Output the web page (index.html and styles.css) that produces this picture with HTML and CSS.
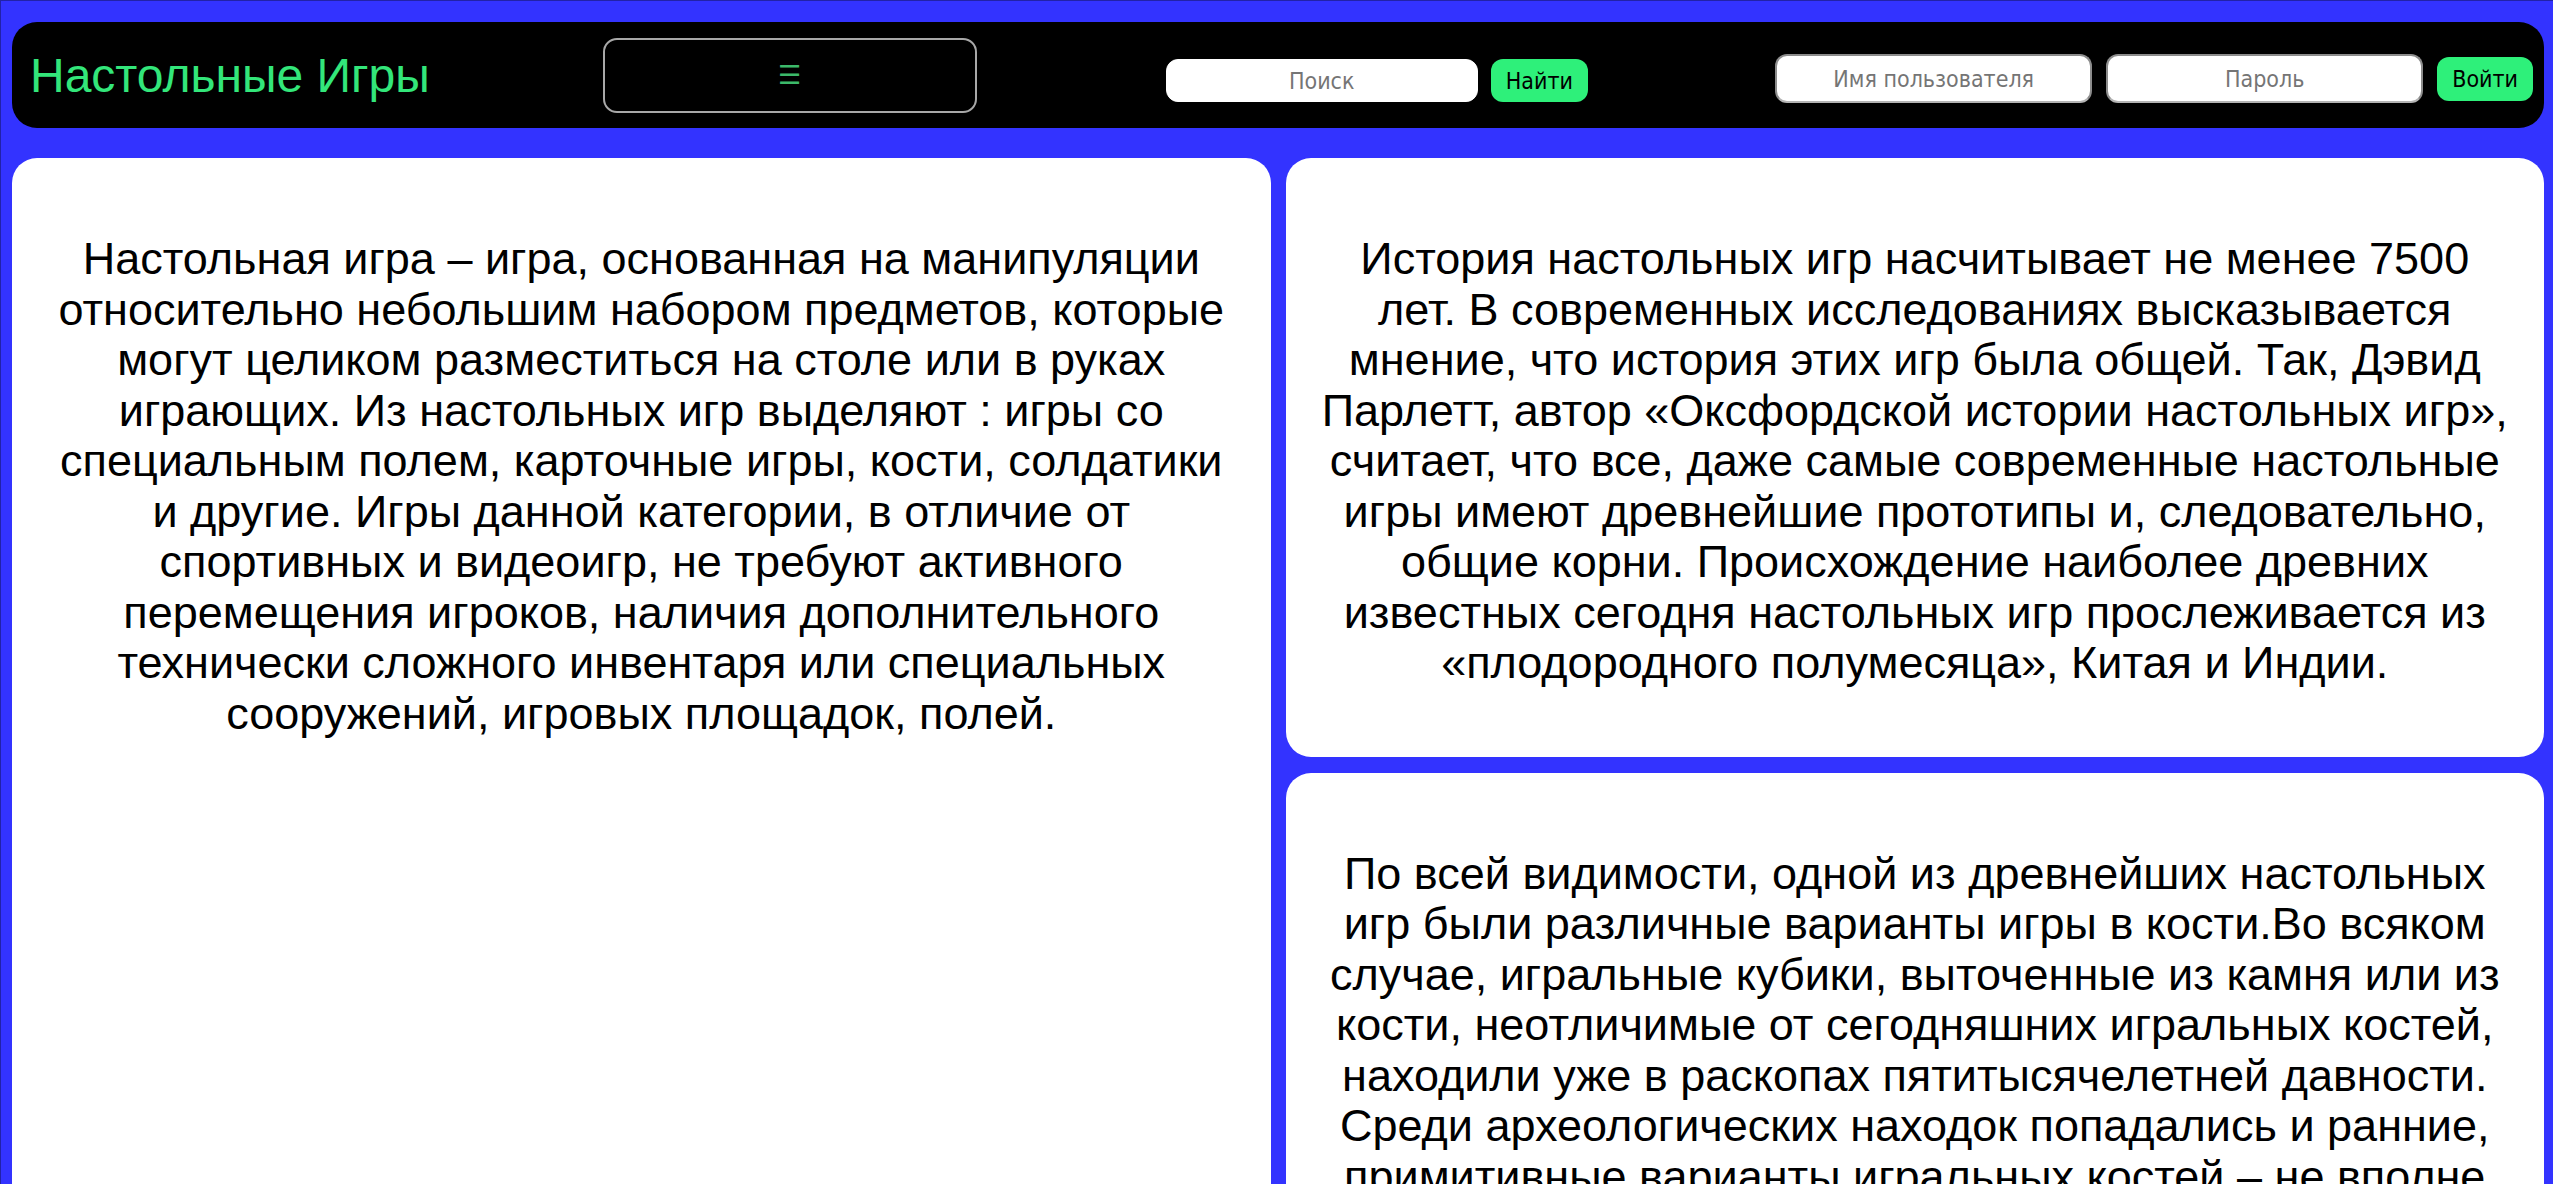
FILE: index.html
```html
<!DOCTYPE html>
<html lang="ru">
<head>
<meta charset="utf-8">
<title>Настольные Игры</title>
<link rel="stylesheet" href="styles.css">
</head>
<body>
<header class="topbar">
  <h1 class="logo">Настольные Игры</h1>
  <button class="menu-btn" type="button">☰</button>
  <form class="search">
    <input class="field field-search" type="text" placeholder="Поиск">
    <button class="btn" type="button">Найти</button>
  </form>
  <form class="login">
    <input class="field field-login" type="text" placeholder="Имя пользователя">
    <input class="field field-login" type="password" placeholder="Пароль">
    <button class="btn" type="button">Войти</button>
  </form>
</header>
<main class="content">
  <section class="card card-main">
    <p>Настольная игра – игра, основанная на манипуляции относительно небольшим набором предметов, которые могут целиком разместиться на столе или в руках играющих. Из настольных игр выделяют : игры со специальным полем, карточные игры, кости, солдатики и другие. Игры данной категории, в отличие от спортивных и видеоигр, не требуют активного перемещения игроков, наличия дополнительного технически сложного инвентаря или специальных сооружений, игровых площадок, полей.</p>
  </section>
  <section class="card">
    <p>История настольных игр насчитывает не менее 7500 лет. В современных исследованиях высказывается мнение, что история этих игр была общей. Так, Дэвид Парлетт, автор «Оксфордской истории настольных игр», считает, что все, даже самые современные настольные игры имеют древнейшие прототипы и, следовательно, общие корни. Происхождение наиболее древних известных сегодня настольных игр прослеживается из «плодородного полумесяца», Китая и Индии.</p>
  </section>
  <section class="card">
    <p>По всей видимости, одной из древнейших настольных игр были различные варианты игры в кости.Во всяком случае, игральные кубики, выточенные из камня или из кости, неотличимые от сегодняшних игральных костей, находили уже в раскопах пятитысячелетней давности. Среди археологических находок попадались и ранние, примитивные варианты игральных костей – не вполне правильной формы, с неровными гранями и нечёткими отметками очков.</p>
  </section>
</main>
</body>
</html>
```
FILE: styles.css
```css
html, body { margin: 0; padding: 0; }
html {
  background: #3333ff;
  border-top: 1px solid #2222a8;
  border-left: 1px solid #2222a8;
}
body {
  background: #3333ff;
  padding: 21px 9px 0 11px;
  font-family: "Liberation Sans", Arial, sans-serif;
}
.topbar {
  display: flex;
  align-items: center;
  height: 106px;
  background: #000;
  border-radius: 25px;
  padding: 0 11px 0 18px;
}
.logo {
  margin: 0;
  font-weight: normal;
  font-size: 48px;
  color: #33e67a;
}
.menu-btn {
  margin-left: 173px;
  width: 374px;
  height: 75px;
  background: #000;
  border: 2px solid #a8a8a8;
  border-radius: 14px;
  color: #3cb96a;
  font-size: 26px;
  font-family: "DejaVu Sans", sans-serif;
}
.search { margin-left: 189px; margin-top: 11px; display: flex; align-items: center; }
.login { margin-left: auto; margin-top: 7px; display: flex; align-items: center; }
.field {
  box-sizing: border-box;
  background: #fff;
  border-radius: 12px;
  text-align: center;
  font-family: "DejaVu Sans Condensed", "DejaVu Sans", sans-serif;
  font-size: 23px;
  color: #333;
  outline: none;
}
.field::placeholder { color: #757575; }
.field-search { width: 312px; height: 43px; border: 1px solid #fff; }
.field-login {
  width: 317px;
  height: 49px;
  border: 2px solid #8c8c8c;
  border-bottom-color: #b4b4b4;
  margin-right: 14px;
}
.btn {
  margin-left: 13px;
  height: 43px;
  padding: 0 15px;
  background: #2ef07a;
  border: none;
  border-radius: 12px;
  font-family: "DejaVu Sans Condensed", "DejaVu Sans", sans-serif;
  font-size: 23px;
  color: #000;
}
.login .btn { margin-left: 0; height: 44px; }
.content {
  margin-top: 30px;
  display: grid;
  grid-template-columns: 1fr 1fr;
  grid-template-rows: auto auto;
  gap: 16px 15px;
}
.card {
  background: #fff;
  border-radius: 25px;
  padding: 36px 30px 28px;
  text-align: center;
  font-family: "Liberation Sans", Arial, sans-serif;
  font-size: 45px;
  line-height: 50.5px;
  color: #000;
}
.card-main { grid-row: span 2; }
.card p { margin: 40px 0; }
```
